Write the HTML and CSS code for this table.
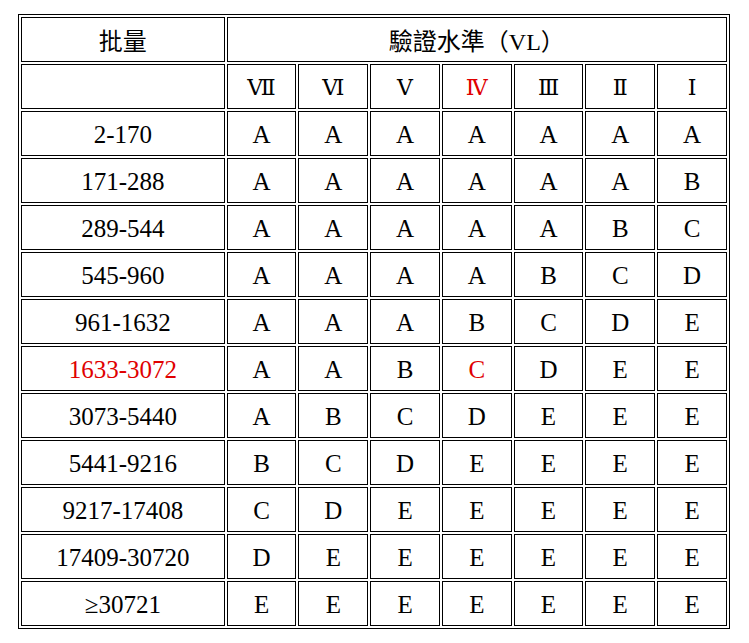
FILE: index.html
```html
<!DOCTYPE html>
<html lang="zh-Hant">
<head>
<meta charset="utf-8">
<title>驗證水準</title>
<link rel="stylesheet" href="styles.css">
</head>
<body>
<div class="page">
<table class="vl-table">
  <colgroup>
    <col class="c-lot">
    <col class="c-lv"><col class="c-lv"><col class="c-lv"><col class="c-lv"><col class="c-lv"><col class="c-lv"><col class="c-lv">
  </colgroup>
  <tr>
    <td class="cjk">批量</td>
    <td class="cjk" colspan="7">驗證水準（VL）</td>
  </tr>
  <tr>
    <td></td>
    <td class="num">Ⅶ</td><td class="num">Ⅵ</td><td class="num">Ⅴ</td><td class="num red">Ⅳ</td><td class="num">Ⅲ</td><td class="num">Ⅱ</td><td class="num">Ⅰ</td>
  </tr>
  <tr><td>2-170</td><td>A</td><td>A</td><td>A</td><td>A</td><td>A</td><td>A</td><td>A</td></tr>
  <tr><td>171-288</td><td>A</td><td>A</td><td>A</td><td>A</td><td>A</td><td>A</td><td>B</td></tr>
  <tr><td>289-544</td><td>A</td><td>A</td><td>A</td><td>A</td><td>A</td><td>B</td><td>C</td></tr>
  <tr><td>545-960</td><td>A</td><td>A</td><td>A</td><td>A</td><td>B</td><td>C</td><td>D</td></tr>
  <tr><td>961-1632</td><td>A</td><td>A</td><td>A</td><td>B</td><td>C</td><td>D</td><td>E</td></tr>
  <tr><td class="red">1633-3072</td><td>A</td><td>A</td><td>B</td><td class="red">C</td><td>D</td><td>E</td><td>E</td></tr>
  <tr><td>3073-5440</td><td>A</td><td>B</td><td>C</td><td>D</td><td>E</td><td>E</td><td>E</td></tr>
  <tr><td>5441-9216</td><td>B</td><td>C</td><td>D</td><td>E</td><td>E</td><td>E</td><td>E</td></tr>
  <tr><td>9217-17408</td><td>C</td><td>D</td><td>E</td><td>E</td><td>E</td><td>E</td><td>E</td></tr>
  <tr><td>17409-30720</td><td>D</td><td>E</td><td>E</td><td>E</td><td>E</td><td>E</td><td>E</td></tr>
  <tr><td>≥30721</td><td>E</td><td>E</td><td>E</td><td>E</td><td>E</td><td>E</td><td>E</td></tr>
</table>
</div>
</body>
</html>
```

FILE: styles.css
```css
html, body {
  margin: 0;
  padding: 0;
  background: #fff;
}
.page {
  padding: 14px 0 0 18px;
}
.vl-table {
  width: 712px;
  table-layout: fixed;
  border: 1px solid #000;
  border-collapse: separate;
  border-spacing: 2px;
  font-family: "Liberation Serif", "Times New Roman", "Noto Sans CJK TC", serif;
  font-size: 25px;
  color: #000;
}
.c-lot { width: 203px; }
.c-lv { width: 69.5px; }
.vl-table td {
  border: 1px solid #000;
  height: 45px;
  padding: 2px 0 0;
  text-align: center;
  vertical-align: middle;
  box-sizing: border-box;
  white-space: nowrap;
}
.cjk {
  font-family: "Liberation Serif", "Noto Sans CJK TC", serif;
  font-size: 24px;
  font-weight: 400;
}
.vl-table td.cjk {
  padding-top: 0;
}
.num {
  font-family: "DejaVu Serif", "Liberation Serif", serif;
  font-size: 22px;
}
.red {
  color: #e00000;
}
```
